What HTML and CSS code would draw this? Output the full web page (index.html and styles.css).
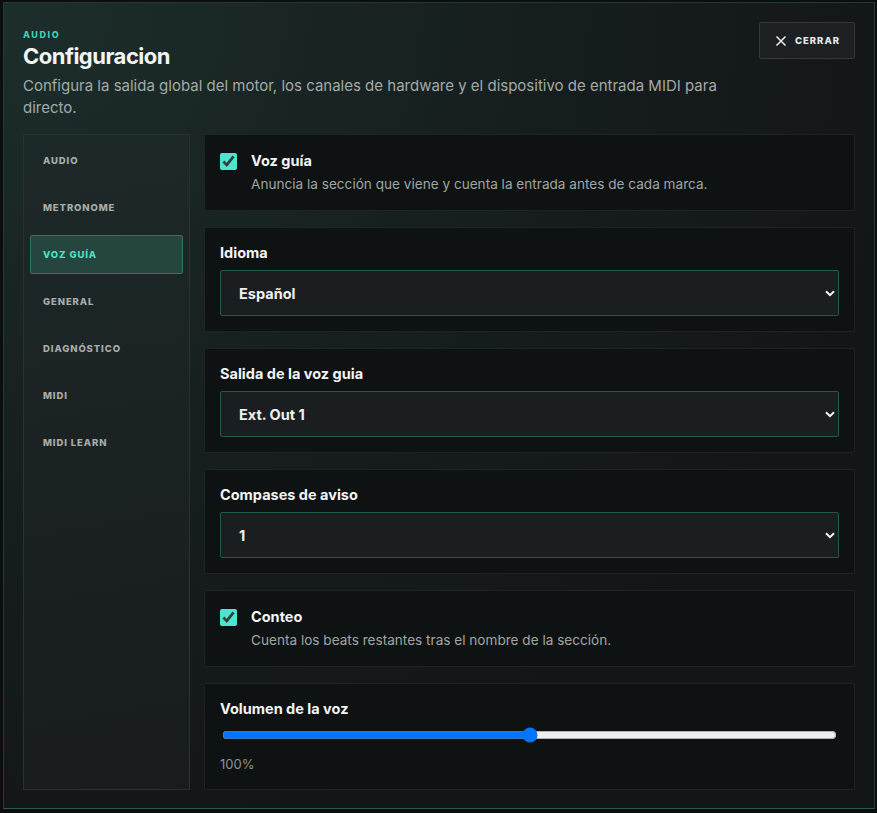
FILE: index.html
```html
<!DOCTYPE html>
<html lang="es">
<head>
  <meta charset="UTF-8">
  <title>Configuracion</title>
  <meta name="viewport" content="width=device-width, initial-scale=1.0">
  <link rel="stylesheet" href="styles.css">
</head>
<body>

<div class="modal">
  <div class="header">
    <div class="header-text">
      <div class="eyebrow">AUDIO</div>
      <h1>Configuracion</h1>
      <p class="lead">Configura la salida global del motor, los canales de hardware y el dispositivo de entrada MIDI para directo.</p>
    </div>
    <button class="close">
      <svg width="12" height="12" viewBox="0 0 12 12"><path d="M1.5 1.5 L10.5 10.5 M10.5 1.5 L1.5 10.5" stroke="#e8ecea" stroke-width="1.6" fill="none"/></svg>
      <span>CERRAR</span>
    </button>
  </div>

  <div class="body">
    <nav class="sidebar">
      <div class="nav-item">AUDIO</div>
      <div class="nav-item">METRONOME</div>
      <div class="nav-item active">VOZ GUÍA</div>
      <div class="nav-item">GENERAL</div>
      <div class="nav-item">DIAGNÓSTICO</div>
      <div class="nav-item">MIDI</div>
      <div class="nav-item">MIDI LEARN</div>
    </nav>

    <main class="content">
      <div class="card check-card">
        <input type="checkbox" checked>
        <div>
          <div class="check-title">Voz guía</div>
          <div class="check-desc">Anuncia la sección que viene y cuenta la entrada antes de cada marca.</div>
        </div>
      </div>

      <div class="card">
        <div class="label">Idioma</div>
        <div class="select-wrap">
          <select><option>Español</option></select>
          <svg class="chevron" width="10" height="7" viewBox="0 0 10 7"><path d="M1 1.2 L5 5.2 L9 1.2" stroke="#f2f4f3" stroke-width="2" fill="none"/></svg>
        </div>
      </div>

      <div class="card">
        <div class="label">Salida de la voz guia</div>
        <div class="select-wrap">
          <select><option>Ext. Out 1</option></select>
          <svg class="chevron" width="10" height="7" viewBox="0 0 10 7"><path d="M1 1.2 L5 5.2 L9 1.2" stroke="#f2f4f3" stroke-width="2" fill="none"/></svg>
        </div>
      </div>

      <div class="card">
        <div class="label">Compases de aviso</div>
        <div class="select-wrap">
          <select><option>1</option></select>
          <svg class="chevron" width="10" height="7" viewBox="0 0 10 7"><path d="M1 1.2 L5 5.2 L9 1.2" stroke="#f2f4f3" stroke-width="2" fill="none"/></svg>
        </div>
      </div>

      <div class="card check-card">
        <input type="checkbox" checked>
        <div>
          <div class="check-title">Conteo</div>
          <div class="check-desc">Cuenta los beats restantes tras el nombre de la sección.</div>
        </div>
      </div>

      <div class="card">
        <div class="label">Volumen de la voz</div>
        <input class="range" type="range" min="0" max="200" value="100">
        <div class="value">100%</div>
      </div>
    </main>
  </div>
</div>

</body>
</html>
```

FILE: styles.css
```css
html, body {
  margin: 0;
  height: 100%;
}
body {
  background-color: #0b0d0e;
  font-family: 'Inter', 'Liberation Sans', sans-serif;
  color: #eef1f0;
  padding: 2px 2px 4px 3px;
  box-sizing: border-box;
}
.modal {
  height: 100%;
  box-sizing: border-box;
  border: 1px solid #1f3b36;
  border-bottom-color: #2a5a50;
  background: radial-gradient(ellipse at 0% 0%, #1c2e2b 0%, #161d1e 45%, #131617 75%);
  padding: 18px 19px 18px 19px;
  display: flex;
  flex-direction: column;
}
.header {
  display: flex;
  justify-content: space-between;
  align-items: flex-start;
}
.header-text {
  padding-top: 8px;
}
.eyebrow {
  font-size: 9px;
  font-weight: 800;
  letter-spacing: 1.6px;
  color: #3fd1b6;
  line-height: 12px;
}
h1 {
  margin: 2px 0 0;
  font-size: 22px;
  font-weight: 700;
  letter-spacing: -0.5px;
  line-height: 26px;
  color: #f3f5f4;
}
.lead {
  margin: 6px 0 0;
  max-width: 710px;
  font-size: 15px;
  line-height: 22px;
  color: #a3aaa8;
}
.close {
  display: flex;
  align-items: center;
  gap: 8px;
  height: 37px;
  margin-top: 1px;
  padding: 0 14px 0 15px;
  background-color: #1d2022;
  border: 1px solid #34393b;
  border-radius: 2px;
  color: #e6e9e8;
  font-family: inherit;
  font-size: 9.5px;
  font-weight: 800;
  letter-spacing: 1px;
}
.body {
  flex: 1;
  display: flex;
  gap: 14px;
  margin-top: 15px;
  min-height: 0;
}
.sidebar {
  width: 167px;
  box-sizing: border-box;
  flex-shrink: 0;
  border: 1px solid #283231;
  background: linear-gradient(170deg, #1d2928 0%, #1a2021 60%, #181c1d 100%);
  padding: 6px;
  display: flex;
  flex-direction: column;
  gap: 8px;
}
.nav-item {
  height: 39px;
  box-sizing: border-box;
  display: flex;
  align-items: center;
  padding-left: 12px;
  font-size: 9.5px;
  font-weight: 800;
  letter-spacing: 0.9px;
  color: #a7adab;
  border: 1px solid transparent;
  border-radius: 2px;
}
.nav-item.active {
  background-color: #24463f;
  border-color: #2f7565;
  color: #4be0c3;
}
.content {
  flex: 1;
  display: flex;
  flex-direction: column;
  gap: 16px;
}
.card {
  background-color: #0f1213;
  border: 1px solid #1e2325;
  border-radius: 2px;
  padding: 15px;
}
.check-card {
  display: flex;
  gap: 14px;
  align-items: flex-start;
  padding-top: 16px;
  padding-bottom: 16px;
}
.check-card input {
  margin: 2px 0 0;
  width: 17px;
  height: 17px;
  accent-color: #4be6d0;
}
.check-title {
  font-size: 14.5px;
  font-weight: 700;
  line-height: 20px;
  color: #f3f5f4;
}
.check-desc {
  margin-top: 4px;
  font-size: 13.6px;
  line-height: 19px;
  color: #a0a5a4;
}
.label {
  font-size: 14.5px;
  font-weight: 700;
  line-height: 19px;
  color: #f3f5f4;
}
.select-wrap {
  position: relative;
  margin-top: 8px;
}
select {
  display: block;
  appearance: none;
  width: 100%;
  height: 46px;
  padding: 0 18px;
  background-color: #1b1e20;
  border: 1px solid #24574b;
  border-radius: 2px;
  color: #eef1f0;
  font-family: inherit;
  font-size: 14.5px;
  font-weight: 700;
}
.chevron {
  position: absolute;
  right: 4px;
  top: 20px;
}
.range {
  display: block;
  width: calc(100% - 4px);
  margin: 9px 2px 0;
  height: 16px;
}
.value {
  margin-top: 12px;
  font-size: 13px;
  line-height: 19px;
  color: #8c9190;
}
```
